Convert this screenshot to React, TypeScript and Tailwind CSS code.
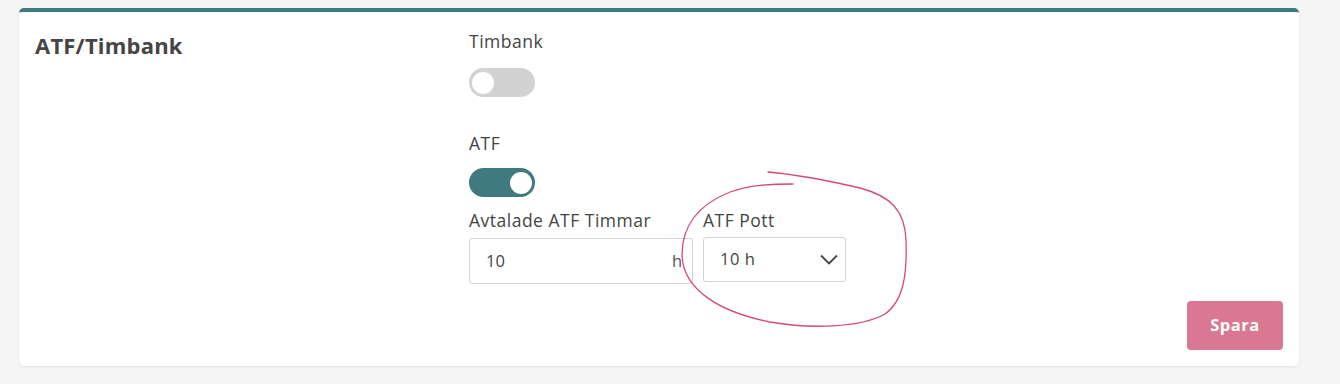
import React from "react";

function Toggle({ on }: { on: boolean }) {
  return (
    <div
      className={`w-[66px] h-[29px] rounded-full flex items-center px-[3px] ${
        on ? "bg-[#3f7a80] justify-end" : "bg-[#d2d2d2] justify-start"
      }`}
    >
      <div className="w-[22px] h-[22px] rounded-full bg-white" />
    </div>
  );
}

export default function App() {
  return (
    <div
      className="relative w-[1340px] h-[384px] bg-[#f5f5f5] pt-[8px] pl-[19px]"
      style={{ fontFamily: "'Open Sans', Lato, sans-serif" }}
    >
      <div className="w-[1280px] bg-white rounded-[5px] border-t-[4px] border-[#3f7a80] shadow-[0_1px_3px_rgba(0,0,0,0.08)] pt-[17px] pb-[16px] pl-[16px] pr-[16px] text-[#444444]">
        <div className="flex">
          <div className="w-[434px] pt-[2px]">
            <h2 className="text-[22px] leading-[28px] font-bold text-[#454545] tracking-[0.2px]">ATF/Timbank</h2>
          </div>
          <div className="flex flex-col">
            <div className="text-[17.5px] leading-[24px] mb-[15px] tracking-[0.5px]">Timbank</div>
            <Toggle on={false} />
            <div className="text-[17.5px] leading-[24px] mt-[34px] mb-[13px] tracking-[0.5px]">ATF</div>
            <Toggle on={true} />
            <div className="flex gap-[10px] mt-[11px]">
              <div className="flex flex-col">
                <div className="text-[17.5px] leading-[24px] mb-[6px] tracking-[0.5px]">Avtalade ATF Timmar</div>
                <div className="w-[224px] h-[46px] border border-[#d3d3d3] rounded-[3px] flex items-center justify-between pl-[16px] pr-[10px] text-[16.5px]">
                  <span>10</span>
                  <span className="text-[#555]">h</span>
                </div>
              </div>
              <div className="flex flex-col">
                <div className="text-[17.5px] leading-[24px] mb-[5px] tracking-[0.5px]">ATF Pott</div>
                <div className="w-[143px] h-[45px] border border-[#d3d3d3] rounded-[3px] flex items-center justify-between pl-[16px] pr-[7px] text-[16.5px] tracking-[0.5px]">
                  <span>10 h</span>
                  <svg width="18" height="11" viewBox="0 0 18 11" fill="none">
                    <path d="M1 1.5 L9 9.5 L17 1.5" stroke="#444" strokeWidth="1.8" />
                  </svg>
                </div>
              </div>
            </div>
          </div>
        </div>
        <div className="flex justify-end mt-[17px]">
          <button className="w-[96px] h-[49px] rounded-[4px] bg-[#da7792] text-white text-[16.5px] font-bold tracking-[0.5px]">
            Spara
          </button>
        </div>
      </div>
      <svg
        className="absolute left-0 top-0 pointer-events-none"
        width="1340"
        height="384"
        viewBox="0 0 1340 384"
        fill="none"
      >
        <path
          d="M 793 184 C 770 184, 750 185, 730 192 C 700 204, 682 225, 682 255 C 683 290, 720 312, 770 322 C 810 329, 860 328, 885 314 C 905 300, 907 270, 906 240 C 905 210, 890 196, 860 188 C 830 181, 800 175, 768 172"
          stroke="#d5497a"
          strokeWidth="1.3"
          strokeLinecap="round"
        />
      </svg>
    </div>
  );
}
